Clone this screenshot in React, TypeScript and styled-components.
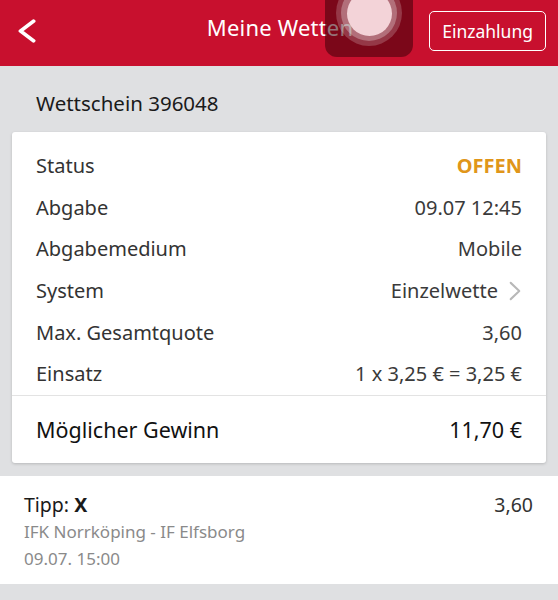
import styled, { createGlobalStyle } from 'styled-components';

const GlobalStyle = createGlobalStyle`
  html, body {
    margin: 0;
    padding: 0;
    background: #dfe0e2;
    font-family: "Noto Sans", "Open Sans", sans-serif;
    -webkit-font-smoothing: antialiased;
  }
  * { box-sizing: border-box; }
`;

const Page = styled.div`
  width: 558px;
  height: 600px;
  overflow: hidden;
  background: #dfe0e2;
`;

const Header = styled.header`
  position: relative;
  height: 66px;
  background: #c8102e;
  display: grid;
  grid-template-columns: 1fr auto 1fr;
  align-items: center;
  padding: 0 12px 4px 14px;
`;

const BackButton = styled.button`
  justify-self: start;
  background: none;
  border: none;
  padding: 4px;
  display: flex;
  cursor: pointer;
`;

const Title = styled.h1`
  margin: 0 0 8px;
  color: #fff;
  font-size: 22px;
  font-weight: 400;
  letter-spacing: 0.2px;
`;

const DepositButton = styled.button`
  justify-self: end;
  height: 40px;
  padding: 0 12px;
  background: transparent;
  border: 1.5px solid #fff;
  border-radius: 5px;
  color: #fff;
  font-family: inherit;
  font-size: 17.5px;
`;

const TouchOverlay = styled.div`
  position: absolute;
  left: 325px;
  top: -12px;
  width: 88px;
  height: 69px;
  border-radius: 12px;
  background: rgba(60, 0, 10, 0.55);
`;

const TouchRing = styled.div<{ size: number; color: string }>`
  position: absolute;
  left: 50%;
  top: 25px;
  width: ${(p) => p.size}px;
  height: ${(p) => p.size}px;
  margin-left: ${(p) => -p.size / 2}px;
  margin-top: ${(p) => -p.size / 2}px;
  border-radius: 50%;
  background: ${(p) => p.color};
`;

const TicketTitle = styled.div`
  padding: 23px 36px 15px;
  font-size: 20.5px;
  color: #1a1a1a;
`;

const Card = styled.section`
  margin: 0 12px;
  background: #fff;
  border-radius: 3px;
  box-shadow: 0 1px 3px rgba(0, 0, 0, 0.18);
`;

const Rows = styled.div`
  padding: 13px 24px 0;
`;

const Row = styled.div`
  height: 41.6px;
  display: flex;
  align-items: center;
  justify-content: space-between;
  font-size: 20px;
  color: #333;
`;

const Value = styled.span<{ status?: boolean }>`
  display: flex;
  align-items: center;
  gap: 11px;
  color: ${(p) => (p.status ? '#e0961a' : '#3a3a3a')};
  font-weight: ${(p) => (p.status ? 700 : 400)};
`;

const LinkArrow = styled.span`
  display: flex;
  margin-right: 1px;
`;

const TotalRow = styled.div`
  border-top: 1px solid #e3e3e3;
  height: 68px;
  padding: 0 24px;
  display: flex;
  align-items: center;
  justify-content: space-between;
  font-size: 21.5px;
  color: #111;
`;

const Tip = styled.section`
  margin-top: 13px;
  background: #fff;
  padding: 16px 24px 11px;
  height: 108px;
`;

const TipHead = styled.div`
  display: flex;
  justify-content: space-between;
  font-size: 19.5px;
  color: #1a1a1a;
  line-height: 26px;
  b { font-weight: 700; }
`;

const TipQuote = styled.span`
  padding-right: 1px;
  color: #333;
`;

const Meta = styled.div`
  font-size: 17px;
  color: #8a8a8a;
  line-height: 27px;
`;

function Chevron({ color, w, h, width, flip }: { color: string; w: number; h: number; width: number; flip?: boolean }) {
  const d = flip ? 'M2 2 L12 11 L2 20' : 'M12 2 L2 11 L12 20';
  return (
    <svg width={w} height={h} viewBox="0 0 14 22" fill="none" preserveAspectRatio="none">
      <path d={d} stroke={color} strokeWidth={width} strokeLinecap="round" strokeLinejoin="round" />
    </svg>
  );
}

const rows: { label: string; value: string; status?: boolean; link?: boolean }[] = [
  { label: 'Status', value: 'OFFEN', status: true },
  { label: 'Abgabe', value: '09.07 12:45' },
  { label: 'Abgabemedium', value: 'Mobile' },
  { label: 'System', value: 'Einzelwette', link: true },
  { label: 'Max. Gesamtquote', value: '3,60' },
  { label: 'Einsatz', value: '1 x 3,25 € = 3,25 €' },
];

export default function App() {
  return (
    <Page>
      <GlobalStyle />
      <Header>
        <BackButton aria-label="Zurück">
          <Chevron color="#fff" w={18} h={24} width={3.2} />
        </BackButton>
        <Title>Meine Wetten</Title>
        <DepositButton>Einzahlung</DepositButton>
        <TouchOverlay>
          <TouchRing size={66} color="rgba(255,255,255,0.2)" />
          <TouchRing size={56} color="rgba(255,255,255,0.28)" />
          <TouchRing size={45} color="#f3d3d8" />
        </TouchOverlay>
      </Header>
      <TicketTitle>Wettschein 396048</TicketTitle>
      <Card>
        <Rows>
          {rows.map((r) => (
            <Row key={r.label}>
              <span>{r.label}</span>
              <Value status={r.status}>
                {r.value}
                {r.link && (
                  <LinkArrow>
                    <Chevron color="#b8b8b8" w={12} h={20} width={2.4} flip />
                  </LinkArrow>
                )}
              </Value>
            </Row>
          ))}
        </Rows>
        <TotalRow>
          <span>Möglicher Gewinn</span>
          <span>11,70 €</span>
        </TotalRow>
      </Card>
      <Tip>
        <TipHead>
          <span>
            Tipp: <b>X</b>
          </span>
          <TipQuote>3,60</TipQuote>
        </TipHead>
        <Meta>IFK Norrköping - IF Elfsborg</Meta>
        <Meta>09.07. 15:00</Meta>
      </Tip>
    </Page>
  );
}
